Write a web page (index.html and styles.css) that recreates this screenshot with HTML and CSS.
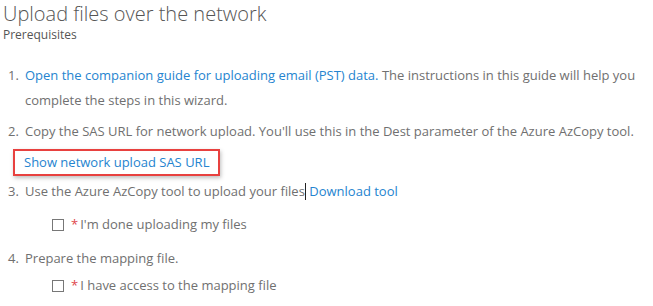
FILE: index.html
```html
<!DOCTYPE html>
<html lang="en">
<head>
    <meta charset="UTF-8">
    <title>Upload files over the network</title>
    <link rel="stylesheet" href="styles.css">
</head>
<body>
    <div class="page">
        <h1>Upload files over the network</h1>
        <div class="subtitle">Prerequisites</div>

        <ol class="steps">
            <li class="step">
                <span class="num">1.</span>
                <div class="body">
                    <a href="#" class="link">Open the companion guide for uploading email (PST) data.</a> The instructions in this guide will help you complete the steps in this wizard.
                </div>
            </li>
            <li class="step">
                <span class="num">2.</span>
                <div class="body">Copy the SAS URL for network upload. You'll use this in the Dest parameter of the Azure AzCopy tool.</div>
            </li>
            <li class="sas">
                <a href="#" class="link sas-link">Show network upload SAS URL</a>
            </li>
            <li class="step">
                <span class="num">3.</span>
                <div class="body">Use the Azure AzCopy tool to upload your files<span class="caret"></span> <a href="#" class="link">Download tool</a></div>
            </li>
            <li class="check">
                <span class="box"></span>
                <span class="req">*</span>
                <span>I'm done uploading my files</span>
            </li>
            <li class="step">
                <span class="num">4.</span>
                <div class="body">Prepare the mapping file.</div>
            </li>
            <li class="check last">
                <span class="box"></span>
                <span class="req">*</span>
                <span>I have access to the mapping file</span>
            </li>
        </ol>
    </div>
</body>
</html>
```

FILE: styles.css
```css
/* Base */
body {
    margin: 0;
    font-family: 'Open Sans', 'Noto Sans', sans-serif;
    background-color: #fff;
    color: #707070;
    overflow: hidden;
}

.page {
    padding: 0 0 0 3px;
}

h1 {
    margin: 0;
    font-size: 20px;
    line-height: 28px;
    font-weight: 300;
    color: #555;
}

.subtitle {
    font-size: 12px;
    line-height: 14px;
    color: #555;
}

/* Steps list */
.steps {
    list-style: none;
    margin: 21px 0 0;
    padding: 0;
    font-size: 13px;
    line-height: 25px;
}

.step {
    display: flex;
    margin-bottom: 6px;
}

.step .num {
    box-sizing: border-box;
    width: 22px;
    padding-left: 5px;
    flex-shrink: 0;
}

.step .body {
    width: 625px;
}

.link {
    color: #2584cf;
    text-decoration: none;
}

.caret {
    display: inline-block;
    width: 1px;
    height: 17px;
    background-color: #222;
    vertical-align: -4px;
}

/* SAS URL box */
.sas {
    margin: -1px 0 3px 10px;
}

.sas-link {
    display: inline-block;
    padding: 0 9px;
    line-height: 23px;
    border: 2px solid #e8413f;
    box-shadow: 1px 2px 4px rgba(0, 0, 0, 0.25);
}

/* Checkboxes */
.check {
    display: flex;
    align-items: center;
    padding-left: 49px;
    margin: 8px 0 9px;
}

.check.last {
    margin-top: -4px;
}

.box {
    width: 10px;
    height: 10px;
    border: 1px solid #777;
    margin-right: 7px;
}

.req {
    color: #e0474c;
    margin-right: 2px;
}
```
